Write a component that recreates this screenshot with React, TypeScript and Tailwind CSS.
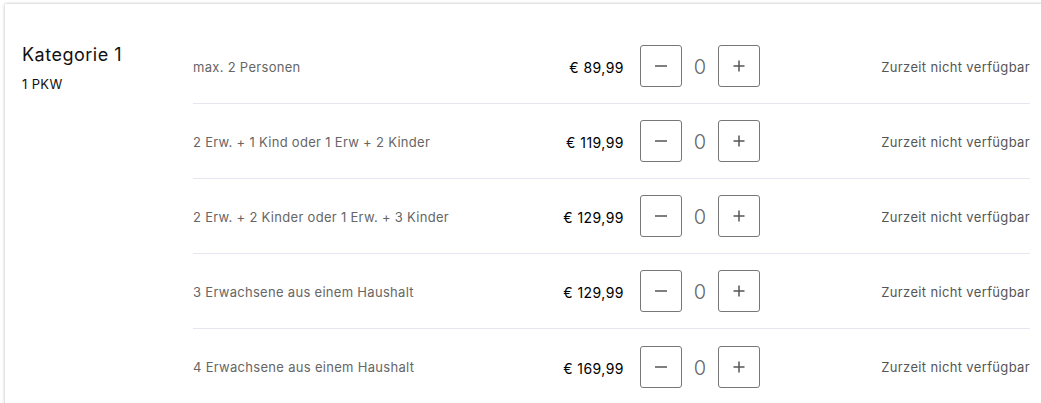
import React from "react";

const rows = [
  { d: "max. 2 Personen", p: "€ 89,99" },
  { d: "2 Erw. + 1 Kind oder 1 Erw + 2 Kinder", p: "€ 119,99" },
  { d: "2 Erw. + 2 Kinder oder 1 Erw. + 3 Kinder", p: "€ 129,99" },
  { d: "3 Erwachsene aus einem Haushalt", p: "€ 129,99" },
  { d: "4 Erwachsene aus einem Haushalt", p: "€ 169,99" },
];

function Minus() {
  return (
    <svg width="14" height="14" viewBox="0 0 14 14">
      <line x1="1" y1="7" x2="13" y2="7" stroke="#555" strokeWidth="1.5" />
    </svg>
  );
}
function Plus() {
  return (
    <svg width="14" height="14" viewBox="0 0 14 14">
      <line x1="1.5" y1="7" x2="12.5" y2="7" stroke="#555" strokeWidth="1.5" />
      <line x1="7" y1="1.5" x2="7" y2="12.5" stroke="#555" strokeWidth="1.5" />
    </svg>
  );
}

export default function App() {
  return (
    <div
      className="w-[1041px] h-[403px] overflow-hidden bg-white pl-[5px] pt-[4px]"
      style={{ fontFamily: "Inter, 'Noto Sans', sans-serif" }}
    >
      <div className="w-[1080px] h-[420px] bg-white shadow-[0_0_3px_rgba(0,0,0,0.3)] flex pt-[25px] pl-[17px]">
        <div className="w-[171px] shrink-0 pt-[12px]">
          <div className="text-[18px] leading-[28px] text-[#111] tracking-[0.5px]">Kategorie 1</div>
          <div className="text-[13px] leading-[16px] mt-[7px] text-[#111] tracking-[0.35px]">1 PKW</div>
        </div>
        <div className="w-[837px] shrink-0">
          {rows.map((r, i) => (
            <div
              key={i}
              className={
                "h-[75px] flex items-center " +
                (i < rows.length - 1 ? "border-b border-[#e6e6f2]" : "")
              }
            >
              <div className="w-[360px] text-[13px] text-[#666] tracking-[0.3px] pt-[3px]">{r.d}</div>
              <div className="w-[71px] text-right text-[14px] font-normal text-black tracking-[0.45px] pt-[3px]">{r.p}</div>
              <div className="ml-[16px] flex items-center">
                <button className="w-[42px] h-[42px] border border-[#777] rounded-[3px] flex items-center justify-center bg-white">
                  <Minus />
                </button>
                <div className="w-[36px] text-center text-[20px] font-light text-[#666] pt-[2px]">0</div>
                <button className="w-[42px] h-[42px] border border-[#777] rounded-[3px] flex items-center justify-center bg-white">
                  <Plus />
                </button>
              </div>
              <div className="flex-1 text-right text-[13px] text-[#555] tracking-[0.35px] pt-[3px]">Zurzeit nicht verfügbar</div>
            </div>
          ))}
        </div>
      </div>
    </div>
  );
}
